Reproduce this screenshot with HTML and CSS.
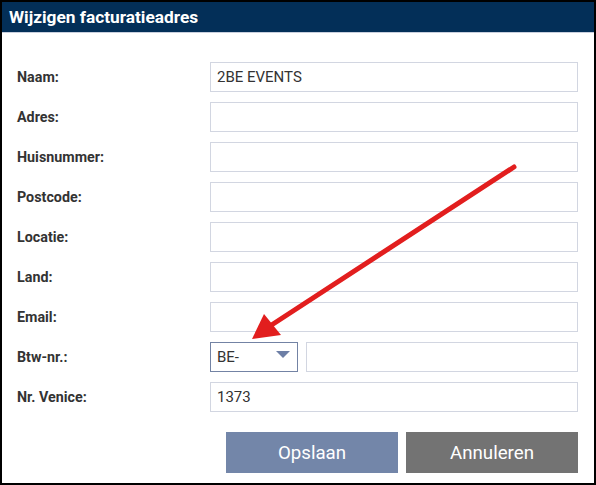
FILE: index.html
```html
<!DOCTYPE html>
<html>
<head>
<meta charset="utf-8">
<link rel="stylesheet" href="styles.css">
</head>
<body>
<div class="dialog">
  <div class="header">Wijzigen facturatieadres</div>
  <div class="body">
    <div class="form">
      <label class="label">Naam:</label>
      <div class="field">2BE EVENTS</div>
      <label class="label">Adres:</label>
      <div class="field"></div>
      <label class="label">Huisnummer:</label>
      <div class="field"></div>
      <label class="label">Postcode:</label>
      <div class="field"></div>
      <label class="label">Locatie:</label>
      <div class="field"></div>
      <label class="label">Land:</label>
      <div class="field"></div>
      <label class="label">Email:</label>
      <div class="field"></div>
      <label class="label">Btw-nr.:</label>
      <div class="btw">
        <div class="select">BE-<span class="caret"></span></div>
        <div class="field"></div>
      </div>
      <label class="label">Nr. Venice:</label>
      <div class="field">1373</div>
    </div>
    <div class="actions">
      <button class="btn btn-save">Opslaan</button>
      <button class="btn btn-cancel">Annuleren</button>
    </div>
  </div>
  <svg class="annotation" width="596" height="485" viewBox="0 0 596 485">
    <line x1="514" y1="167" x2="270" y2="326" stroke="#e21e1e" stroke-width="5" stroke-linecap="round"/>
    <polygon points="252,339 264,314 281,335" fill="#e21e1e"/>
  </svg>
</div>
</body>
</html>
```

FILE: styles.css
```css
* { box-sizing: border-box; }
html, body { margin: 0; padding: 0; background: #fff; }
body { font-family: Roboto, "Liberation Sans", sans-serif; }
.dialog {
  position: relative;
  width: 596px;
  height: 485px;
  border: 2px solid #000;
  background: #fff;
  display: flex;
  flex-direction: column;
}
.header {
  height: 31px;
  background: #032f58;
  border-bottom: 1px solid #c9cfdd;
  color: #fff;
  font-weight: 700;
  font-size: 17.3px;
  line-height: 30px;
  padding-left: 7px;
}
.body {
  padding: 29px 16px 0 15px;
}
.form {
  display: grid;
  grid-template-columns: 193px 1fr;
  grid-auto-rows: 30px;
  row-gap: 10px;
  align-items: center;
}
.label {
  font-weight: 700;
  font-size: 14.3px;
  color: #333;
}
.field {
  height: 30px;
  border: 1px solid #d2d6e1;
  font-size: 15px;
  color: #333;
  line-height: 28px;
  padding-left: 6px;
}
.btw {
  display: flex;
  gap: 8px;
  height: 30px;
}
.btw .field { flex: 1; }
.select {
  position: relative;
  width: 88px;
  height: 30px;
  border: 1px solid #7383a4;
  font-size: 15px;
  color: #333;
  line-height: 28px;
  padding-left: 6px;
}
.caret {
  position: absolute;
  right: 7px;
  top: 8px;
  width: 0;
  height: 0;
  border-left: 7px solid transparent;
  border-right: 7px solid transparent;
  border-top: 7px solid #6d7fa6;
}
.actions {
  display: flex;
  justify-content: flex-end;
  gap: 8px;
  margin-top: 20px;
}
.btn {
  width: 172px;
  height: 41px;
  border: none;
  color: #fff;
  font-family: Roboto, "Liberation Sans", sans-serif;
  font-size: 18.7px;
  padding: 0;
}
.btn-save { background: #7386a9; }
.btn-cancel { background: #737373; }
.annotation {
  position: absolute;
  left: -2px;
  top: -2px;
  pointer-events: none;
}
```
